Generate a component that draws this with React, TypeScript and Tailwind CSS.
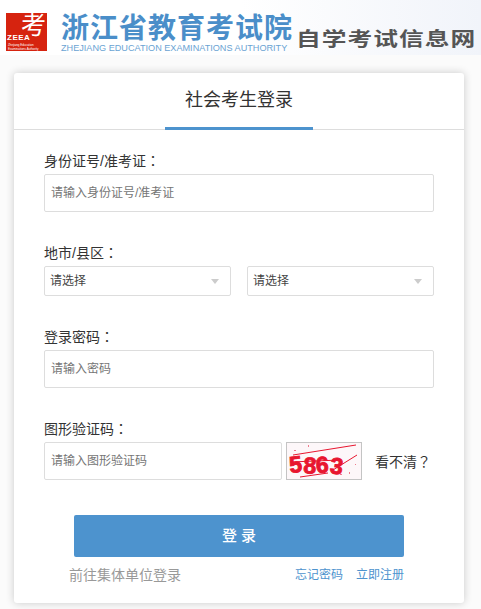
const cjk = "font-['Liberation_Sans','Noto_Sans_CJK_SC',sans-serif]";
// TC face centres the full-width punctuation like the reference
const punct = "font-['Noto_Sans_CJK_TC',sans-serif]";

function Logo() {
  return (
    <div className="relative w-[41px] h-[38px] bg-[#d6230f] overflow-hidden shrink-0 text-white">
      <span className="absolute left-[15px] top-0 text-[25px] leading-[21px] font-['Noto_Sans_CJK_SC',sans-serif]">考</span>
      <span className="absolute left-[1px] top-[21px] text-[8px] leading-[8px] font-bold tracking-[0.5px] font-['Liberation_Sans',sans-serif]">ZEEA</span>
      <div className="absolute left-[2px] top-[30px] text-[3px] leading-[4px] whitespace-nowrap font-['Liberation_Sans',sans-serif]">
        Zhejiang Education
        <br />
        Examinations Authority
      </div>
    </div>
  );
}

function Captcha() {
  return (
    <svg width="76" height="38" viewBox="0 0 76 38" className="shrink-0">
      <rect x="0.5" y="0.5" width="75" height="37" fill="#fdf7f9" stroke="#c4c4c4" />
      <text
        x="4"
        y="31"
        rotate="-6 4 -3 8"
        textLength="52"
        fill="#e8162f"
        stroke="#e8162f"
        strokeWidth="0.9"
        fontSize="23"
        fontWeight="700"
        fontFamily="Liberation Sans, sans-serif"
      >
        5863
      </text>
      <g stroke="#e8162f" strokeWidth="1" fill="none">
        <path d="M7 13l63-10" />
        <path d="M47 28l24-15" />
        <path d="M14 35l28-4" />
        <path d="M4 20l50-2" />
      </g>
      <g fill="#ef7b8c">
        <rect x="22" y="3" width="1" height="2" />
        <rect x="8" y="8" width="2" height="1" />
        <rect x="63" y="30" width="1" height="2" />
        <rect x="54" y="32" width="2" height="1" />
        <rect x="69" y="22" width="1" height="1" />
      </g>
    </svg>
  );
}

function Label({ text }: { text: string }) {
  return (
    <div className="h-[20px] text-sm leading-[20px] text-[#333] mb-[4px] whitespace-nowrap">
      {text}
      <span className={punct}>：</span>
    </div>
  );
}

function Field({ label, placeholder }: { label: string; placeholder: string }) {
  return (
    <div>
      <Label text={label} />
      <div className="h-[38px] border border-[#ddd] rounded-[2px] px-[6px] flex items-center text-xs text-[#757575]">
        {placeholder}
      </div>
    </div>
  );
}

function SelectBox() {
  return (
    <div className="flex-1 h-[30px] border border-[#ddd] rounded-[2px] pl-[5px] pr-[11px] flex items-center justify-between text-xs text-[#444]">
      <span>请选择</span>
      <span className="w-0 h-0 border-x-[4px] border-x-transparent border-t-[5px] border-t-[#ccc]" />
    </div>
  );
}

export default function App() {
  return (
    <div className={`w-[481px] h-[609px] bg-[#fbfbfb] overflow-hidden ${cjk}`}>
      <div className="h-[55px] pl-[6px] pt-[13px] flex bg-gradient-to-r from-white via-white to-[#f1f4fa]">
        <Logo />
        <div className="ml-[14px] w-[232px] shrink-0">
          <div className="text-[#4a8ec9] text-[28px] leading-[28px] font-bold tracking-[1px] whitespace-nowrap font-['Noto_Sans_CJK_SC',sans-serif] -mt-[1px]">
            浙江省教育考试院
          </div>
          <div className="text-[#6aa3d3] text-[9.15px] leading-[10px] mt-[3px] whitespace-nowrap font-['Liberation_Sans',sans-serif]">
            ZHEJIANG EDUCATION EXAMINATIONS AUTHORITY
          </div>
        </div>
        <div className="ml-[3px] mt-[13px] text-[#555] text-[19px] leading-[24px] font-bold tracking-[0.8px] whitespace-nowrap scale-x-[1.3] origin-left font-['Noto_Sans_CJK_SC',sans-serif]">
          自学考试信息网
        </div>
      </div>

      <div className="ml-[14px] mt-[18px] w-[450px] h-[530px] bg-white rounded-[3px] shadow-[0_0_8px_rgba(0,0,0,0.2)]">
        <div className="h-[57px] border-b border-[#ddd] flex justify-center">
          <div className="w-[148px] h-[57px] border-b-[3px] border-[#4d93ce] text-center text-lg leading-[54px] text-[#333]">
            社会考生登录
          </div>
        </div>

        <div className="px-[30px] pt-[20px]">
          <Field label="身份证号/准考证" placeholder="请输入身份证号/准考证" />

          <div className="mt-[30px]">
            <Label text="地市/县区" />
            <div className="flex gap-[16px]">
              <SelectBox />
              <SelectBox />
            </div>
          </div>

          <div className="mt-[30px]">
            <Field label="登录密码" placeholder="请输入密码" />
          </div>

          <div className="mt-[30px]">
            <Label text="图形验证码" />
            <div className="flex items-center">
              <div className="w-[238px] h-[38px] border border-[#ddd] rounded-[2px] px-[6px] flex items-center text-xs text-[#757575] mr-[4px]">
                请输入图形验证码
              </div>
              <Captcha />
              <div className="ml-[13px] h-[20px] leading-[20px] text-sm text-[#333] whitespace-nowrap">
                看不清<span className={punct}>？</span>
              </div>
            </div>
          </div>

          <div className="mx-[30px] mt-[35px] h-[42px] bg-[#4d93ce] rounded-[2px] flex items-center justify-center text-white text-[15px] font-medium">
            登 录
          </div>

          <div className="mx-[25px] mt-[8px] pr-[5px] flex justify-between items-center text-xs leading-[18px]">
            <span className="text-[#999] text-sm">前往集体单位登录</span>
            <span className="text-[#4d93ce] flex gap-[13px]">
              <span>忘记密码</span>
              <span>立即注册</span>
            </span>
          </div>
        </div>
      </div>
    </div>
  );
}
